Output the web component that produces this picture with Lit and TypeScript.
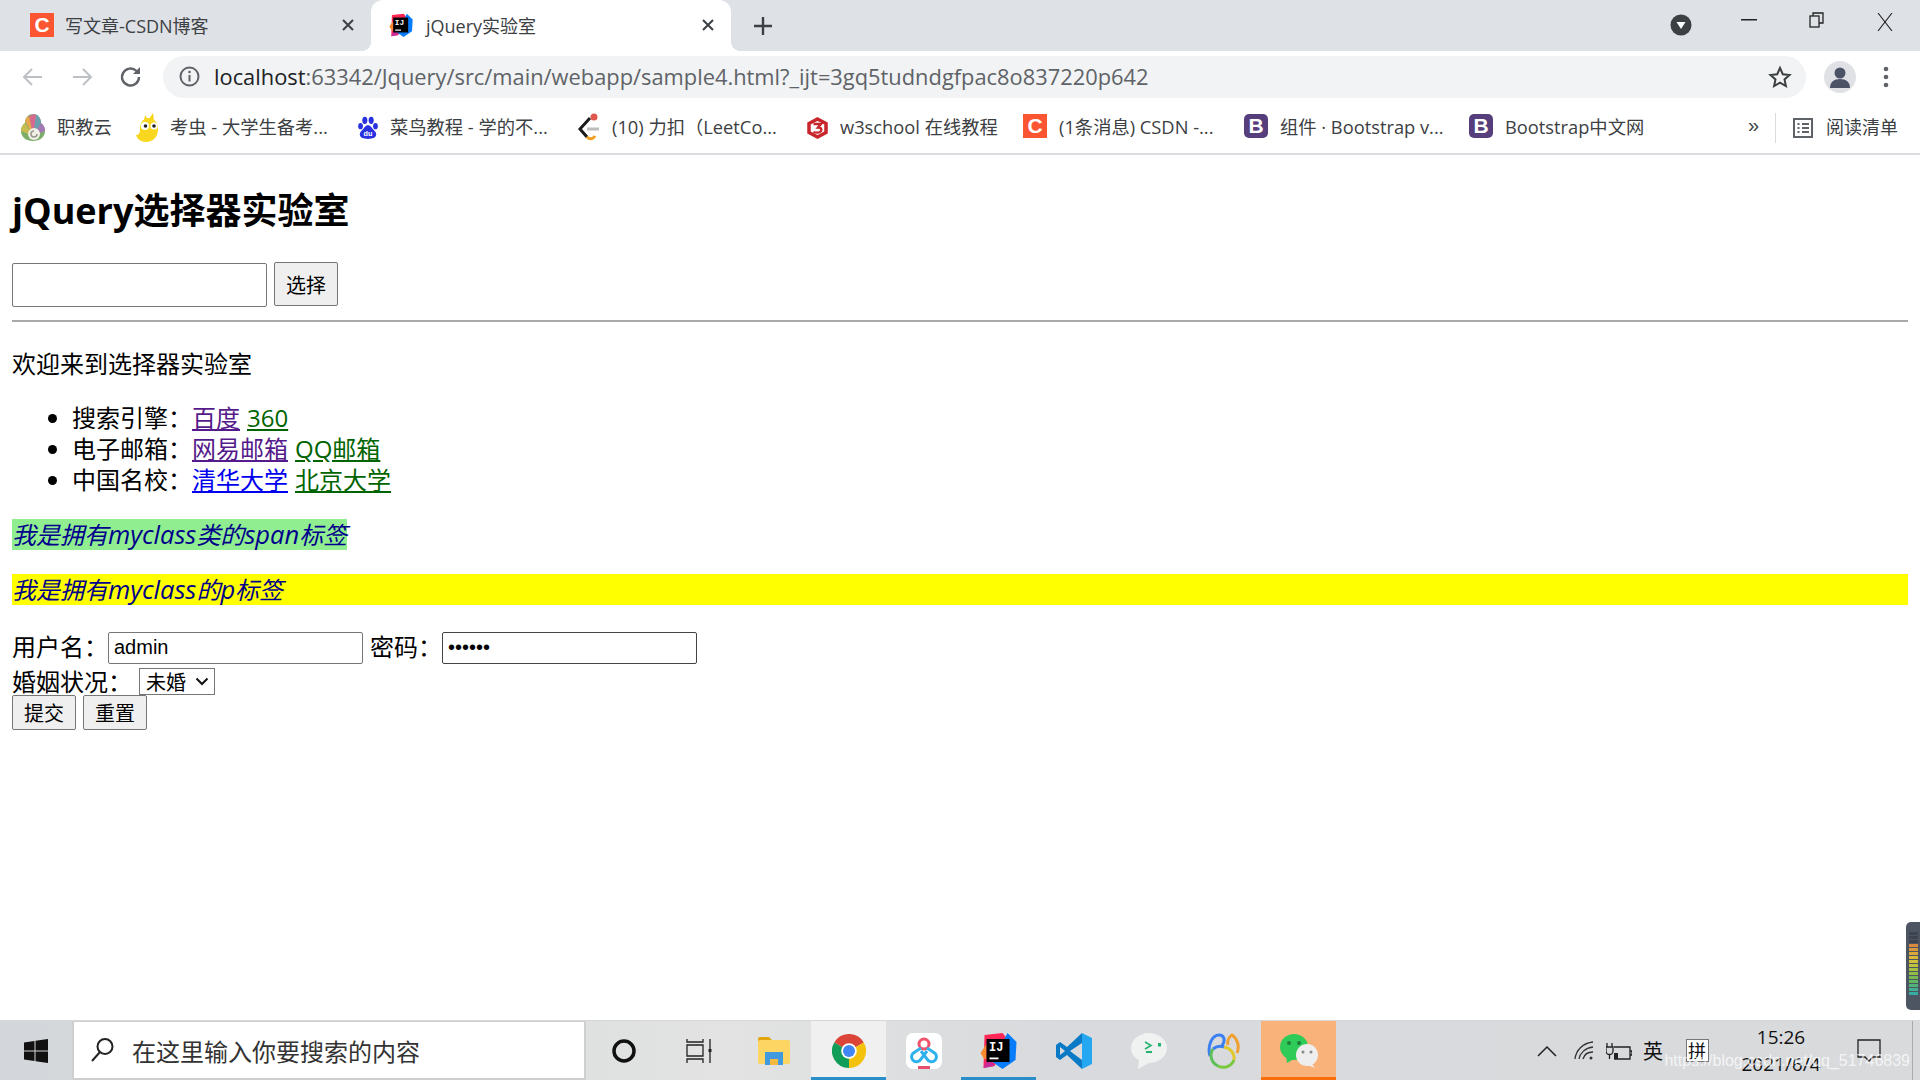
import { LitElement, html, css } from 'lit';
import { customElement } from 'lit/decorators.js';

const letterIcon = (letter: string, cls: string) => html`<span class="letter ${cls}">${letter}</span>`;

const ijIcon = (size: number) => html`<svg width=${size} height=${size} viewBox="0 0 36 37">
	<path d="M4 3 22 1l6 7-14 26-11 2z" fill="#fe2857" />
	<path d="M3 36l5-12 6 10z" fill="#c72c9a" />
	<path d="M0 21l6-9v16l-3-2z" fill="#fd8a2e" />
	<path d="M27 1l9 9-1 18-13 9-10-7z" fill="#087cfa" />
	<rect x="6" y="7" width="23" height="23" fill="#000" />
	<text x="8.500" y="19" font-family="Liberation Mono" font-weight="700" font-size="12" fill="#fff">IJ</text>
	<rect x="9" y="25.500" width="9" height="1.800" fill="#fff" />
</svg>`;

const bookmarkIcons: Record<string, unknown> = {
	zhijiao: html`<svg width="24" height="28" viewBox="0 0 24 28">
		<path d="M12 0c5 0 8 4 8 9 3 2 4 5 4 8 0 6-5 10-12 10S0 23 0 17c0-3 1-6 4-8 0-5 3-9 8-9z" fill="#7cae6a" />
		<path d="M12 0c5 0 8 4 8 9l-8 13z" fill="#6b9fb0" />
		<path d="M8 2c2-1 5-2 7-1l-3 21z" fill="#d96a8c" />
		<path d="M4 7c1-3 2-4 4-5l4 20z" fill="#e8a84c" />
		<path d="M0 17c0-3 1-6 4-8l8 13z" fill="#c8bc50" />
		<path d="M24 17c0-3-1-6-4-8l-8 13z" fill="#a478b4" />
		<circle cx="13" cy="20" r="6" fill="#f2efe6" />
		<path d="M16 20a3 3 0 1 1-3-3" fill="none" stroke="#9a9a8e" stroke-width="1.600" />
	</svg>`,
	kaochong: html`<svg width="22" height="30" viewBox="0 0 22 30">
		<path d="M17 0l1 8-5-2z" fill="#f5d415" />
		<path d="M9 2l3 5-4 1z" fill="#f5d415" />
		<path d="M12 5c6 0 10 4 10 11 0 8-5 13-12 13-5 0-9-3-10-7 3 0 4-2 4-6 0-6 3-11 8-11z" fill="#f9d71f" />
		<circle cx="9" cy="13" r="4" fill="#fff" />
		<circle cx="18" cy="13" r="3.500" fill="#fff" />
		<circle cx="9.500" cy="13" r="1.800" fill="#222" />
		<circle cx="18" cy="13" r="1.800" fill="#222" />
	</svg>`,
	runoob: html`<svg width="20" height="26" viewBox="0 0 22 26" fill="#2932e1">
		<ellipse cx="7.500" cy="4.500" rx="2.800" ry="4" />
		<ellipse cx="14.500" cy="4.500" rx="2.800" ry="4" />
		<ellipse cx="2.800" cy="11" rx="2.600" ry="3.400" />
		<ellipse cx="19.200" cy="11" rx="2.600" ry="3.400" />
		<path d="M11 10c3 0 4 3 6 5s3 3 3 5c0 4-4 5-9 5s-9-1-9-5c0-2 1-3 3-5s3-5 6-5z" />
		<text x="11" y="22" text-anchor="middle" font-family="Liberation Sans" font-weight="700" font-size="8" fill="#fff">du</text>
	</svg>`,
	leetcode: html`<svg width="22" height="30" viewBox="0 0 22 30" fill="none">
		<circle cx="16" cy="4" r="3.500" fill="#e0584c" />
		<path d="M12 5 2 16l7 8" stroke="#1b1b1b" stroke-width="3" />
		<path d="M9 24c3 3 6 2 8-1" stroke="#f0a020" stroke-width="3" />
		<path d="M9 16h12" stroke="#bdbdbd" stroke-width="3" />
	</svg>`,
	w3: html`<svg width="21" height="22" viewBox="0 0 21 22" fill="none">
		<path d="M10.500 2 19 6.500v9L10.500 20 2 15.500v-9z" stroke="#c8252c" stroke-width="3.500" />
		<path d="M6.500 7H14l-3 3.500c3 0 4 1.500 3 3.500s-5 2-7.500 1" stroke="#c8252c" stroke-width="2.400" />
	</svg>`,
};

const bookmarks = [
	{ icon: bookmarkIcons.zhijiao, label: '职教云', width: 115 },
	{ icon: bookmarkIcons.kaochong, label: '考虫 - 大学生备考...', width: 222 },
	{ icon: bookmarkIcons.runoob, label: '菜鸟教程 - 学的不...', width: 220 },
	{ icon: bookmarkIcons.leetcode, label: '(10) 力扣（LeetCo...', width: 229 },
	{ icon: bookmarkIcons.w3, label: 'w3school 在线教程', width: 216 },
	{ icon: letterIcon('C', 'csdn'), label: '(1条消息) CSDN -...', width: 221 },
	{ icon: letterIcon('B', 'boot'), label: '组件 · Bootstrap v...', width: 225 },
	{ icon: letterIcon('B', 'boot'), label: 'Bootstrap中文网', width: 200 },
];

@customElement('browser-chrome')
export class BrowserChrome extends LitElement {
	static styles = css`
		:host {
			display: block;
			font-family: 'Open Sans', 'Noto Sans CJK SC', sans-serif;
			color: #3c4043;
		}
		.tabs {
			display: flex;
			height: 51px;
			background: #dee1e6;
			align-items: stretch;
		}
		.tab {
			display: flex;
			align-items: center;
			width: 371px;
			box-sizing: border-box;
			padding: 0 16px 2px 30px;
			font-size: 18px;
			gap: 11px;
			white-space: nowrap;
		}
		.tab.active {
			position: relative;
			width: 360px;
			padding-left: 18px;
			gap: 13px;
			background: #fff;
			border-radius: 12px 12px 0 0;
		}
		.tab.active::before,
		.tab.active::after {
			content: '';
			position: absolute;
			bottom: 0;
			width: 10px;
			height: 10px;
		}
		.tab.active::before {
			left: -10px;
			background: radial-gradient(circle at 0 0, #dee1e6 10px, #fff 10.5px);
		}
		.tab.active::after {
			right: -10px;
			background: radial-gradient(circle at 100% 0, #dee1e6 10px, #fff 10.5px);
		}
		.tab .close {
			margin-left: auto;
			display: flex;
		}
		.plus {
			display: flex;
			align-items: center;
			margin-left: 22px;
		}
		.window {
			margin-left: auto;
			display: flex;
			align-items: flex-start;
			padding-right: 26px;
		}
		.profile-dot {
			margin: 14px 23px 0 0;
		}
		.win-btn {
			display: flex;
			width: 68px;
			height: 40px;
			justify-content: center;
			align-items: center;
		}
		.win-btn.last {
			width: 18px;
			height: 44px;
			margin-left: 25px;
		}
		.letter {
			display: inline-flex;
			align-items: center;
			justify-content: center;
			width: 24px;
			height: 24px;
			color: #fff;
			font-family: 'Liberation Sans', sans-serif;
			font-weight: 700;
			font-size: 21px;
			flex: none;
		}
		.letter.csdn {
			background: #fc5531;
		}
		.letter.boot {
			background: #563d7c;
			border-radius: 5px;
		}
		.toolbar {
			display: flex;
			height: 51px;
			align-items: center;
			background: #fff;
			padding-left: 21px;
			box-sizing: border-box;
		}
		.nav {
			display: flex;
			gap: 25px;
			margin-right: 20px;
		}
		.omni {
			flex: none;
			width: 1643px;
			height: 42px;
			background: #f1f3f4;
			border-radius: 21px;
			box-sizing: border-box;
			display: flex;
			align-items: center;
			padding: 0 14px 0 16px;
			gap: 14px;
			font-size: 21.85px;
			color: #5f6368;
			white-space: nowrap;
		}
		.omni b {
			font-weight: 400;
			color: #202124;
		}
		.omni .star {
			margin-left: auto;
			display: flex;
		}
		.avatar {
			margin-left: 18px;
			width: 32px;
			height: 32px;
			border-radius: 50%;
			background: #dfe1e5;
			overflow: hidden;
			display: flex;
			flex: none;
		}
		.kebab {
			margin-left: 27px;
			display: flex;
		}
		.bookmarks {
			display: flex;
			height: 51px;
			box-sizing: content-box;
			align-items: center;
			padding-left: 21px;
			border-bottom: 2px solid #dadce0;
			font-size: 18.3px;
			background: #fff;
			white-space: nowrap;
		}
		.bookmark {
			display: flex;
			align-items: center;
			gap: 12px;
			flex: none;
		}
		.bookmark span,
		.reading span,
		.more {
			position: relative;
			top: -2px;
		}
		.more {
			margin-left: 79px;
			width: 22px;
			font-family: 'Liberation Sans', sans-serif;
			font-size: 20px;
		}
		.sep {
			width: 1px;
			height: 30px;
			background: #dadce0;
			margin: 0 16px 0 5px;
		}
		.reading {
			display: flex;
			align-items: center;
			gap: 12px;
			font-size: 18px;
		}
	`;

	render() {
		const closeIcon = html`<svg width="14" height="14" viewBox="0 0 14 14"><path d="M2 2l10 10M12 2 2 12" stroke="#3c4043" stroke-width="2" /></svg>`;
		return html`
			<div class="tabs">
				<div class="tab">
					${letterIcon('C', 'csdn')}<span>写文章-CSDN博客</span>
					<span class="close">${closeIcon}</span>
				</div>
				<div class="tab active">
					${ijIcon(24)}<span>jQuery实验室</span>
					<span class="close">${closeIcon}</span>
				</div>
				<div class="plus">
					<svg width="20" height="20" viewBox="0 0 20 20"><path d="M10 1v18M1 10h18" stroke="#3c4043" stroke-width="2.400" /></svg>
				</div>
				<div class="window">
					<svg class="profile-dot" width="22" height="22" viewBox="0 0 22 22">
						<circle cx="11" cy="11" r="10.500" fill="#3c4043" />
						<path d="M6.500 8h9L11 15z" fill="#fff" />
					</svg>
					<div class="win-btn">
						<svg width="16" height="2" viewBox="0 0 16 2"><rect width="16" height="1.500" fill="#222" /></svg>
					</div>
					<div class="win-btn">
						<svg width="16" height="16" viewBox="0 0 16 16" fill="none" stroke="#222" stroke-width="1.300"><rect x="1" y="4" width="9" height="11" /><path d="M4 4V1h10v10h-4" /></svg>
					</div>
					<div class="win-btn last">
						<svg width="18" height="18" viewBox="0 0 18 18"><path d="M2 0l14 18M16 0 2 18" stroke="#222" stroke-width="1.100" /></svg>
					</div>
				</div>
			</div>
			<div class="toolbar">
				<div class="nav">
					<svg width="24" height="24" viewBox="0 0 24 24" fill="none" stroke="#bdc1c6" stroke-width="2"><path d="M21 12H3M11 4l-8 8 8 8" /></svg>
					<svg width="24" height="24" viewBox="0 0 24 24" fill="none" stroke="#bdc1c6" stroke-width="2"><path d="M3 12h18M13 4l8 8-8 8" /></svg>
					<svg width="24" height="24" viewBox="0 0 24 24" fill="none" stroke="#5f6368" stroke-width="2.400"><path d="M20 12a8.500 8.500 0 1 1-2.500-6" /><path d="M21 2v7h-7z" fill="#5f6368" stroke="none" /></svg>
				</div>
				<div class="omni">
					<svg width="21" height="21" viewBox="0 0 21 21" fill="none"><circle cx="10.500" cy="10.500" r="9" stroke="#5f6368" stroke-width="2" /><path d="M10.500 9v6.500" stroke="#5f6368" stroke-width="2" /><circle cx="10.500" cy="6" r="1.300" fill="#5f6368" /></svg>
					<span><b>localhost</b>:63342/Jquery/src/main/webapp/sample4.html?_ijt=3gq5tudndgfpac8o837220p642</span>
					<span class="star">
						<svg width="24" height="24" viewBox="0 0 24 24" fill="none" stroke="#3c4043" stroke-width="2"><path d="M12 3l2.800 6.200 6.700.7-5 4.500 1.400 6.600-5.900-3.400L6.100 21l1.400-6.600-5-4.500 6.700-.7z" /></svg>
					</span>
				</div>
				<span class="avatar">
					<svg width="32" height="32" viewBox="0 0 32 32" fill="#4c5366"><circle cx="16" cy="12" r="5.500" /><path d="M6 27c0-6 4-9 10-9s10 3 10 9z" /></svg>
				</span>
				<span class="kebab">
					<svg width="6" height="22" viewBox="0 0 6 22" fill="#5f6368"><circle cx="3" cy="3" r="2.300" /><circle cx="3" cy="11" r="2.300" /><circle cx="3" cy="19" r="2.300" /></svg>
				</span>
			</div>
			<div class="bookmarks">
				${bookmarks.map(
					(b) => html`<div class="bookmark" style="width:${b.width}px">${b.icon}<span>${b.label}</span></div>`,
				)}
				<span class="more">»</span>
				<span class="sep"></span>
				<div class="reading">
					<svg width="22" height="24" viewBox="0 0 22 24" fill="none" stroke="#5f6368" stroke-width="2"><rect x="2" y="3" width="18" height="18" /><path d="M5.500 8h2M10 8h7M5.500 12h2M10 12h7M5.500 16h2M10 16h7" /></svg>
					<span>阅读清单</span>
				</div>
			</div>
		`;
	}
}

@customElement('lab-page')
export class LabPage extends LitElement {
	static styles = css`
		:host {
			display: block;
			font-family: 'Open Sans', 'Noto Sans CJK SC', sans-serif;
			font-size: 24px;
			color: #000;
			padding: 0 12px;
		}
		h1 {
			margin: 31px 0 26px;
			font-size: 36px;
			line-height: 50px;
			font-weight: 700;
			height: 50px;
		}
		.picker {
			display: flex;
			gap: 7px;
			height: 45px;
		}
		.picker input {
			width: 255px;
			height: 44px;
			margin-top: 1px;
		}
		input {
			box-sizing: border-box;
			border: 1px solid #767676;
			border-radius: 2px;
			padding: 0 5px 2px;
			font-family: 'Liberation Sans', 'Noto Sans CJK SC', sans-serif;
			font-size: 20px;
			background: #fff;
		}
		button {
			box-sizing: border-box;
			width: 64px;
			height: 44px;
			padding: 0;
			background: #efefef;
			border: 1px solid #767676;
			border-radius: 2px;
			font-family: 'Noto Sans CJK SC', sans-serif;
			font-size: 20px;
			color: #000;
		}
		hr {
			margin: 13px 0 0;
			height: 2px;
			border: 0;
			background: #a9a9a9;
		}
		.welcome {
			margin: 26px 0 22px;
			line-height: 32px;
		}
		ul {
			margin: 0 0 24px;
			padding: 0 0 0 60px;
		}
		li {
			height: 31px;
			line-height: 31px;
		}
		li a {
			margin-right: 7px;
		}
		a {
			text-decoration: underline;
		}
		.visited {
			color: #551a8b;
		}
		.fresh {
			color: #0000ee;
		}
		.green {
			color: #006400;
		}
		.my {
			margin: 0;
			height: 31px;
			line-height: 31px;
			font-style: italic;
			color: #00008b;
		}
		.my .chip {
			display: inline-block;
			background: #90ee90;
		}
		.my .la {
			font-size: 25.5px;
		}
		.my.bar {
			margin-top: 24px;
			background: #ff0;
		}
		form {
			margin-top: 27px;
		}
		.row {
			display: flex;
			align-items: center;
		}
		.row.one {
			height: 32px;
		}
		.row.one > span {
			padding-bottom: 5px;
		}
		.row.one input {
			width: 255px;
			height: 32px;
		}
		.row.one span + input + span {
			margin-left: 7px;
		}
		input.pw {
			border-color: #444;
		}
		.row.two {
			height: 27px;
			margin-top: 4px;
		}
		.row.two > span {
			padding-bottom: 2px;
		}
		.status {
			position: relative;
			margin-left: 7px;
			display: flex;
		}
		.status svg {
			position: absolute;
			right: 6px;
			top: 9px;
			pointer-events: none;
		}
		select {
			appearance: none;
			box-sizing: border-box;
			width: 76px;
			height: 27px;
			padding: 0 0 0 6px;
			line-height: 25px;
			background: #fff;
			border: 1px solid #767676;
			border-radius: 0;
			font-family: 'Noto Sans CJK SC', sans-serif;
			font-size: 20px;
			color: #000;
		}
		.row.three {
			gap: 7px;
		}
		.row.three button {
			height: 35px;
		}
	`;

	render() {
		return html`
			<h1>jQuery选择器实验室</h1>
			<div class="picker">
				<input type="text" />
				<button>选择</button>
			</div>
			<hr />
			<p class="welcome">欢迎来到选择器实验室</p>
			<ul>
				<li>搜索引擎：<a class="visited">百度</a><a class="green">360</a></li>
				<li>电子邮箱：<a class="visited">网易邮箱</a><a class="green">QQ邮箱</a></li>
				<li>中国名校：<a class="fresh">清华大学</a><a class="green">北京大学</a></li>
			</ul>
			<p class="my">
				<span class="chip">我是拥有<span class="la">myclass</span>类的<span class="la">span</span>标签</span>
			</p>
			<p class="my bar">我是拥有<span class="la">myclass</span>的<span class="la">p</span>标签</p>
			<form>
				<div class="row one">
					<span>用户名：</span><input type="text" value="admin" /><span>密码：</span
					><input class="pw" type="password" value="123456" />
				</div>
				<div class="row two">
					<span>婚姻状况：</span>
					<div class="status">
						<select><option>未婚</option><option>已婚</option></select>
						<svg width="14" height="9" viewBox="0 0 14 9" fill="none"><path d="M1.500 1.500 7 7l5.500-5.500" stroke="#111" stroke-width="2" /></svg>
					</div>
				</div>
				<div class="row three">
					<button type="button">提交</button>
					<button type="button">重置</button>
				</div>
			</form>
		`;
	}
}

const taskApps = [
	{
		cls: '',
		icon: html`<svg width="26" height="26" viewBox="0 0 26 26" fill="none"><circle cx="13" cy="13" r="10" stroke="#111" stroke-width="3.500" /></svg>`,
	},
	{
		cls: '',
		icon: html`<svg width="26" height="24" viewBox="0 0 26 24" fill="none" stroke="#222" stroke-width="1.300"><path d="M1 0v3h16V0M1 6h16v11H1zM1 24v-4h16v4M24 0v24" /><rect x="22.500" y="10" width="3" height="3" fill="#222" stroke="none" /></svg>`,
	},
	{
		cls: '',
		icon: html`<svg width="32" height="28" viewBox="0 0 32 28">
			<path d="M0 2a2 2 0 0 1 2-2h9l3 3v3H0z" fill="#e2a50f" />
			<rect y="3" width="32" height="24" rx="2" fill="#fcd562" />
			<path d="M7 28V15h18v13h-5v-6h-8v6z" fill="#3f9ae0" />
			<rect x="12" y="22" width="8" height="6" fill="#f5b93f" />
		</svg>`,
	},
	{
		cls: 'open chrome',
		icon: html`<svg width="34" height="34" viewBox="0 0 48 48">
			<path d="M24 24 3.200 12A24 24 0 0 1 44.800 12z" fill="#db4437" />
			<path d="M24 24 44.800 12A24 24 0 0 1 24 48z" fill="#f4c20d" />
			<path d="M24 24V48A24 24 0 0 1 3.200 12z" fill="#0f9d58" />
			<circle cx="24" cy="24" r="11" fill="#fff" />
			<circle cx="24" cy="24" r="8.500" fill="#4285f4" />
		</svg>`,
	},
	{
		cls: '',
		icon: html`<svg width="36" height="36" viewBox="0 0 36 36" fill="none">
			<rect width="36" height="36" rx="7" fill="#fff" />
			<circle cx="18" cy="11" r="5" stroke="#f0546c" stroke-width="3" />
			<path d="M15 15 9 19a5 5 0 1 0 6 7l6-8" stroke="#2fb1ee" stroke-width="3" />
			<path d="M21 15l6 4a5 5 0 1 1-6 7l-6-8" stroke="#2fb1ee" stroke-width="3" />
			<rect x="12" y="33" width="12" height="3" fill="#e9506c" />
		</svg>`,
	},
	{ cls: 'open', icon: ijIcon(37) },
	{
		cls: '',
		icon: html`<svg width="36" height="36" viewBox="0 0 36 36">
			<path fill-rule="evenodd" d="M26 0 11 14 4 9l-4 3v12l4 3 7-5 15 14v-9L14 18l12-8zM4 14l5 4-5 4z" fill="#0a7ac6" />
			<path d="M26 0l10 5v26l-10 5z" fill="#24a7f0" />
		</svg>`,
	},
	{
		cls: '',
		icon: html`<svg width="36" height="36" viewBox="0 0 36 36">
			<ellipse cx="18" cy="15" rx="18" ry="15" fill="#f0f1f1" />
			<path d="M8 26l-1 10 11-6z" fill="#f0f1f1" />
			<path d="M14 9l6 3.500-6 3.500" fill="none" stroke="#23b46e" stroke-width="1.600" />
			<rect x="15" y="18" width="6" height="2" fill="#23b46e" />
			<rect x="27" y="10" width="3" height="3.500" fill="#23b46e" />
		</svg>`,
	},
	{
		cls: '',
		icon: html`<svg width="33" height="36" viewBox="0 0 33 36" fill="none" stroke-width="3">
			<path d="M3 23C0 13 5 2 12 2c5 0 7 5 3 11" stroke="#3c7ff0" />
			<path d="M21 12c-1-4 1-8 4-10 5 3 8 11 5 18" stroke="#f0a030" />
			<path d="M6 16a11.500 11.500 0 0 1 11-2" stroke="#3c7ff0" />
			<path d="M6 16a11.500 11.500 0 0 0 5 17" stroke="#5bbf5a" />
			<path d="M11 33a11.500 11.500 0 0 0 16-6" stroke="#78c840" />
			<path d="M27 27a11.500 11.500 0 0 0-10-13" stroke="#e0c82e" />
		</svg>`,
	},
	{
		cls: 'wechat',
		icon: html`<svg width="38" height="36" viewBox="0 0 38 36">
			<ellipse cx="14" cy="14" rx="14" ry="13" fill="#2fcb58" />
			<path d="M6 22l1 8 7-4z" fill="#2fcb58" />
			<circle cx="9" cy="10" r="2" fill="#1a7f3a" />
			<circle cx="19" cy="10" r="2" fill="#1a7f3a" />
			<ellipse cx="27" cy="22" rx="11" ry="11" fill="#eeeeee" />
			<path d="M31 30l4 5-8-3z" fill="#eeeeee" />
			<circle cx="23" cy="19" r="1.500" fill="#888" />
			<circle cx="31" cy="19" r="1.500" fill="#888" />
		</svg>`,
	},
];

@customElement('task-bar')
export class TaskBar extends LitElement {
	static styles = css`
		:host {
			display: block;
			position: relative;
			flex: none;
			height: 60px;
			font-family: 'Noto Sans CJK SC', sans-serif;
			color: #111;
		}
		.bar {
			display: flex;
			align-items: stretch;
			height: 60px;
			background: linear-gradient(90deg, #d3d6da, #e2e3e2 38%, #d8dadd 55%, #d9dadc);
			border-top: 1px solid #d5d7d9;
			box-sizing: border-box;
		}
		.start {
			width: 72px;
			display: flex;
			align-items: center;
			justify-content: center;
			flex: none;
		}
		.search {
			width: 514px;
			box-sizing: border-box;
			flex: none;
			background: #fff;
			border: 2px solid #cfcfcf;
			border-top-width: 1px;
			display: flex;
			align-items: center;
			padding-left: 16px;
			gap: 18px;
			font-size: 24px;
			color: #333;
		}
		.tile {
			width: 75px;
			flex: none;
			box-sizing: border-box;
			display: flex;
			align-items: center;
			justify-content: center;
			border-bottom: 3px solid transparent;
			padding-top: 3px;
		}
		.tile.open {
			border-bottom-color: #2a8fc9;
		}
		.tile.chrome {
			background: #f0f0f0;
		}
		.tile.wechat {
			background: #f9b27a;
			border-bottom-color: #f76e0a;
		}
		.tray {
			margin-left: auto;
			display: flex;
			align-items: center;
			padding-right: 7px;
		}
		.cell {
			display: flex;
			justify-content: center;
			align-items: center;
		}
		.w38 {
			width: 38px;
		}
		.w36 {
			width: 36px;
		}
		.w34 {
			width: 34px;
		}
		.lang {
			font-size: 20px;
			width: 34px;
		}
		.pinyin {
			width: 54px;
			font-size: 18px;
		}
		.pinyin span {
			display: block;
			width: 23px;
			height: 23px;
			line-height: 21px;
			text-align: center;
			box-sizing: border-box;
			border: 1px solid #777;
			background: #fff;
		}
		.clock {
			width: 114px;
			text-align: center;
			font-size: 19px;
			line-height: 27px;
			font-family: 'Open Sans', sans-serif;
		}
		.notify {
			width: 74px;
			justify-content: flex-start;
			padding-left: 19px;
			box-sizing: border-box;
		}
		.desk {
			width: 1px;
			height: 60px;
			background: #a9abae;
		}
		.watermark {
			position: absolute;
			right: 10px;
			top: 30px;
			font-family: 'Liberation Sans', sans-serif;
			font-size: 16px;
			line-height: 22px;
			color: rgba(255, 255, 255, 0.72);
		}
	`;

	render() {
		return html`
			<div class="bar">
				<div class="start">
					<svg width="24" height="24" viewBox="0 0 24 24" fill="#111"><path d="M0 3.500 10.500 2v9.500H0zM11.500 1.800 24 0v11.500H11.500zM0 12.500h10.500V22L0 20.500zM11.500 12.500H24V24l-12.500-1.800z" /></svg>
				</div>
				<div class="search">
					<svg width="24" height="26" viewBox="0 0 24 26" fill="none" stroke="#222" stroke-width="2"><circle cx="15" cy="9.500" r="7.500" /><path d="M10 15 2 24" /></svg>
					<span>在这里输入你要搜索的内容</span>
				</div>
				${taskApps.map((a) => html`<div class="tile ${a.cls}">${a.icon}</div>`)}
				<div class="tray">
					<span class="cell w38">
						<svg width="20" height="12" viewBox="0 0 20 12" fill="none" stroke="#222" stroke-width="1.500"><path d="M1 11l9-9 9 9" /></svg>
					</span>
					<span class="cell w36">
						<svg width="20" height="20" viewBox="0 0 20 20" fill="none" stroke="#333" stroke-width="1.300"><path d="M1 18C2 9 9 2 19 1M5 18c1-6 6-11 14-12M9 18c1-4 4-7 10-7" /><circle cx="17" cy="17" r="1.500" fill="#333" stroke="none" /></svg>
					</span>
					<span class="cell w34">
						<svg width="26" height="18" viewBox="0 0 26 18" fill="none" stroke="#222" stroke-width="1.300"><path d="M8 5h16v12H8" /><path d="M24 9h2v4h-2" /><path d="M1 1v4M6 1v4M0 5h7v4a3 3 0 0 1-7 0zM3.500 12v5" /><rect x="8" y="11" width="4" height="6" fill="#222" stroke="none" /></svg>
					</span>
					<span class="cell lang">英</span>
					<span class="cell pinyin"><span>拼</span></span>
					<div class="clock">15:26<br />2021/6/4</div>
					<span class="cell notify">
						<svg width="24" height="24" viewBox="0 0 24 24" fill="none" stroke="#222" stroke-width="1.300"><path d="M1 1h22v17h-7l-4 4-4-4H1z" /></svg>
					</span>
					<span class="desk"></span>
				</div>
			</div>
			<div class="watermark">https://blog.csdn.net/qq_51746839</div>
		`;
	}
}

const meterBars = ['#3d4450', '#3d4450', '#3d4450', '#d98a3c', '#d99a3c', '#dba83c', '#d9b83a', '#d0c03a', '#c0c23c', '#a8c040', '#90bd48', '#78b850', '#60b860', '#50b478', '#42b090', '#38aca0'];

@customElement('app-root')
export class AppRoot extends LitElement {
	static styles = css`
		:host {
			display: flex;
			flex-direction: column;
			position: relative;
			width: 1920px;
			height: 1080px;
			overflow: hidden;
			background: #fff;
		}
		lab-page {
			flex: 1;
		}
		.meter {
			position: absolute;
			left: 1906px;
			top: 922px;
			width: 14px;
			height: 88px;
			box-sizing: border-box;
			padding: 10px 2px 0 3px;
			background: #4e5562;
			border-radius: 5px 0 0 5px;
			display: flex;
			flex-direction: column;
			gap: 1px;
		}
		.meter i {
			display: block;
			height: 3px;
		}
	`;

	render() {
		return html`
			<browser-chrome></browser-chrome>
			<lab-page></lab-page>
			<task-bar></task-bar>
			<div class="meter">${meterBars.map((c) => html`<i style="background:${c}"></i>`)}</div>
		`;
	}
}
